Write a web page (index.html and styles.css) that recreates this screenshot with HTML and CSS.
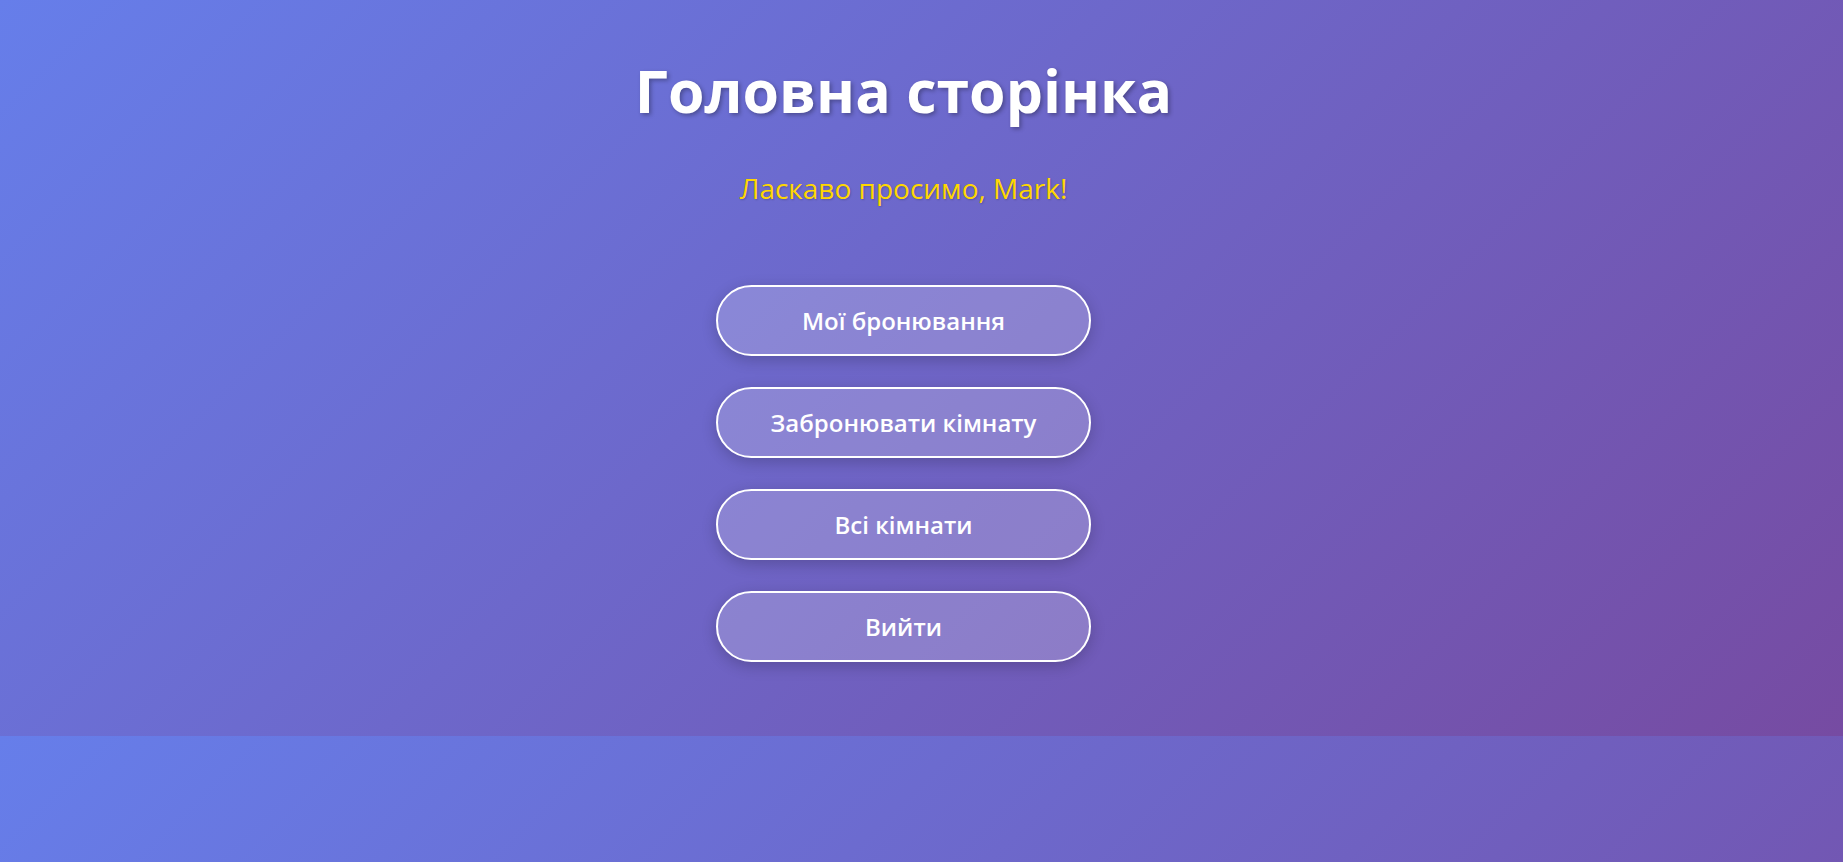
FILE: index.html
```html
<!DOCTYPE html>
<html lang="uk">
<head>
<meta charset="utf-8">
<title>Головна сторінка</title>
<link rel="stylesheet" href="styles.css">
</head>
<body>
<div class="container">
  <h1 class="title">Головна сторінка</h1>
  <p class="welcome">Ласкаво просимо, Mark!</p>
  <nav class="menu">
    <a class="menu-btn" href="#">Мої бронювання</a>
    <a class="menu-btn" href="#">Забронювати кімнату</a>
    <a class="menu-btn" href="#">Всі кімнати</a>
    <a class="menu-btn" href="#">Вийти</a>
  </nav>
</div>
</body>
</html>
```

FILE: styles.css
```css
html {
  margin: 0;
}
body {
  margin: 0;
  font-family: "Open Sans", "Noto Sans", sans-serif;
  background: linear-gradient(135deg, #667eea 0%, #764ba2 100%);
  color: #fff;
}
.container {
  display: flex;
  flex-direction: column;
  align-items: center;
  padding: 55px 36px 74px 0;
}
.title {
  margin: 0;
  font-size: 59px;
  font-weight: 700;
  line-height: 70px;
  text-shadow: 2px 2px 4px rgba(0, 0, 0, 0.3);
}
.welcome {
  margin: 44px 0 0;
  font-size: 28px;
  line-height: 38px;
  color: #ffd700;
  text-shadow: 1px 1px 2px rgba(0, 0, 0, 0.2);
}
.menu {
  display: flex;
  flex-direction: column;
  gap: 31px;
  margin-top: 78px;
}
.menu-btn {
  box-sizing: border-box;
  display: flex;
  align-items: center;
  justify-content: center;
  width: 375px;
  height: 71px;
  border: 2px solid #fff;
  border-radius: 50px;
  background: rgba(255, 255, 255, 0.2);
  box-shadow: 0 4px 15px rgba(0, 0, 0, 0.2);
  color: #fff;
  text-decoration: none;
  font-size: 24px;
  font-weight: 600;
}
```
